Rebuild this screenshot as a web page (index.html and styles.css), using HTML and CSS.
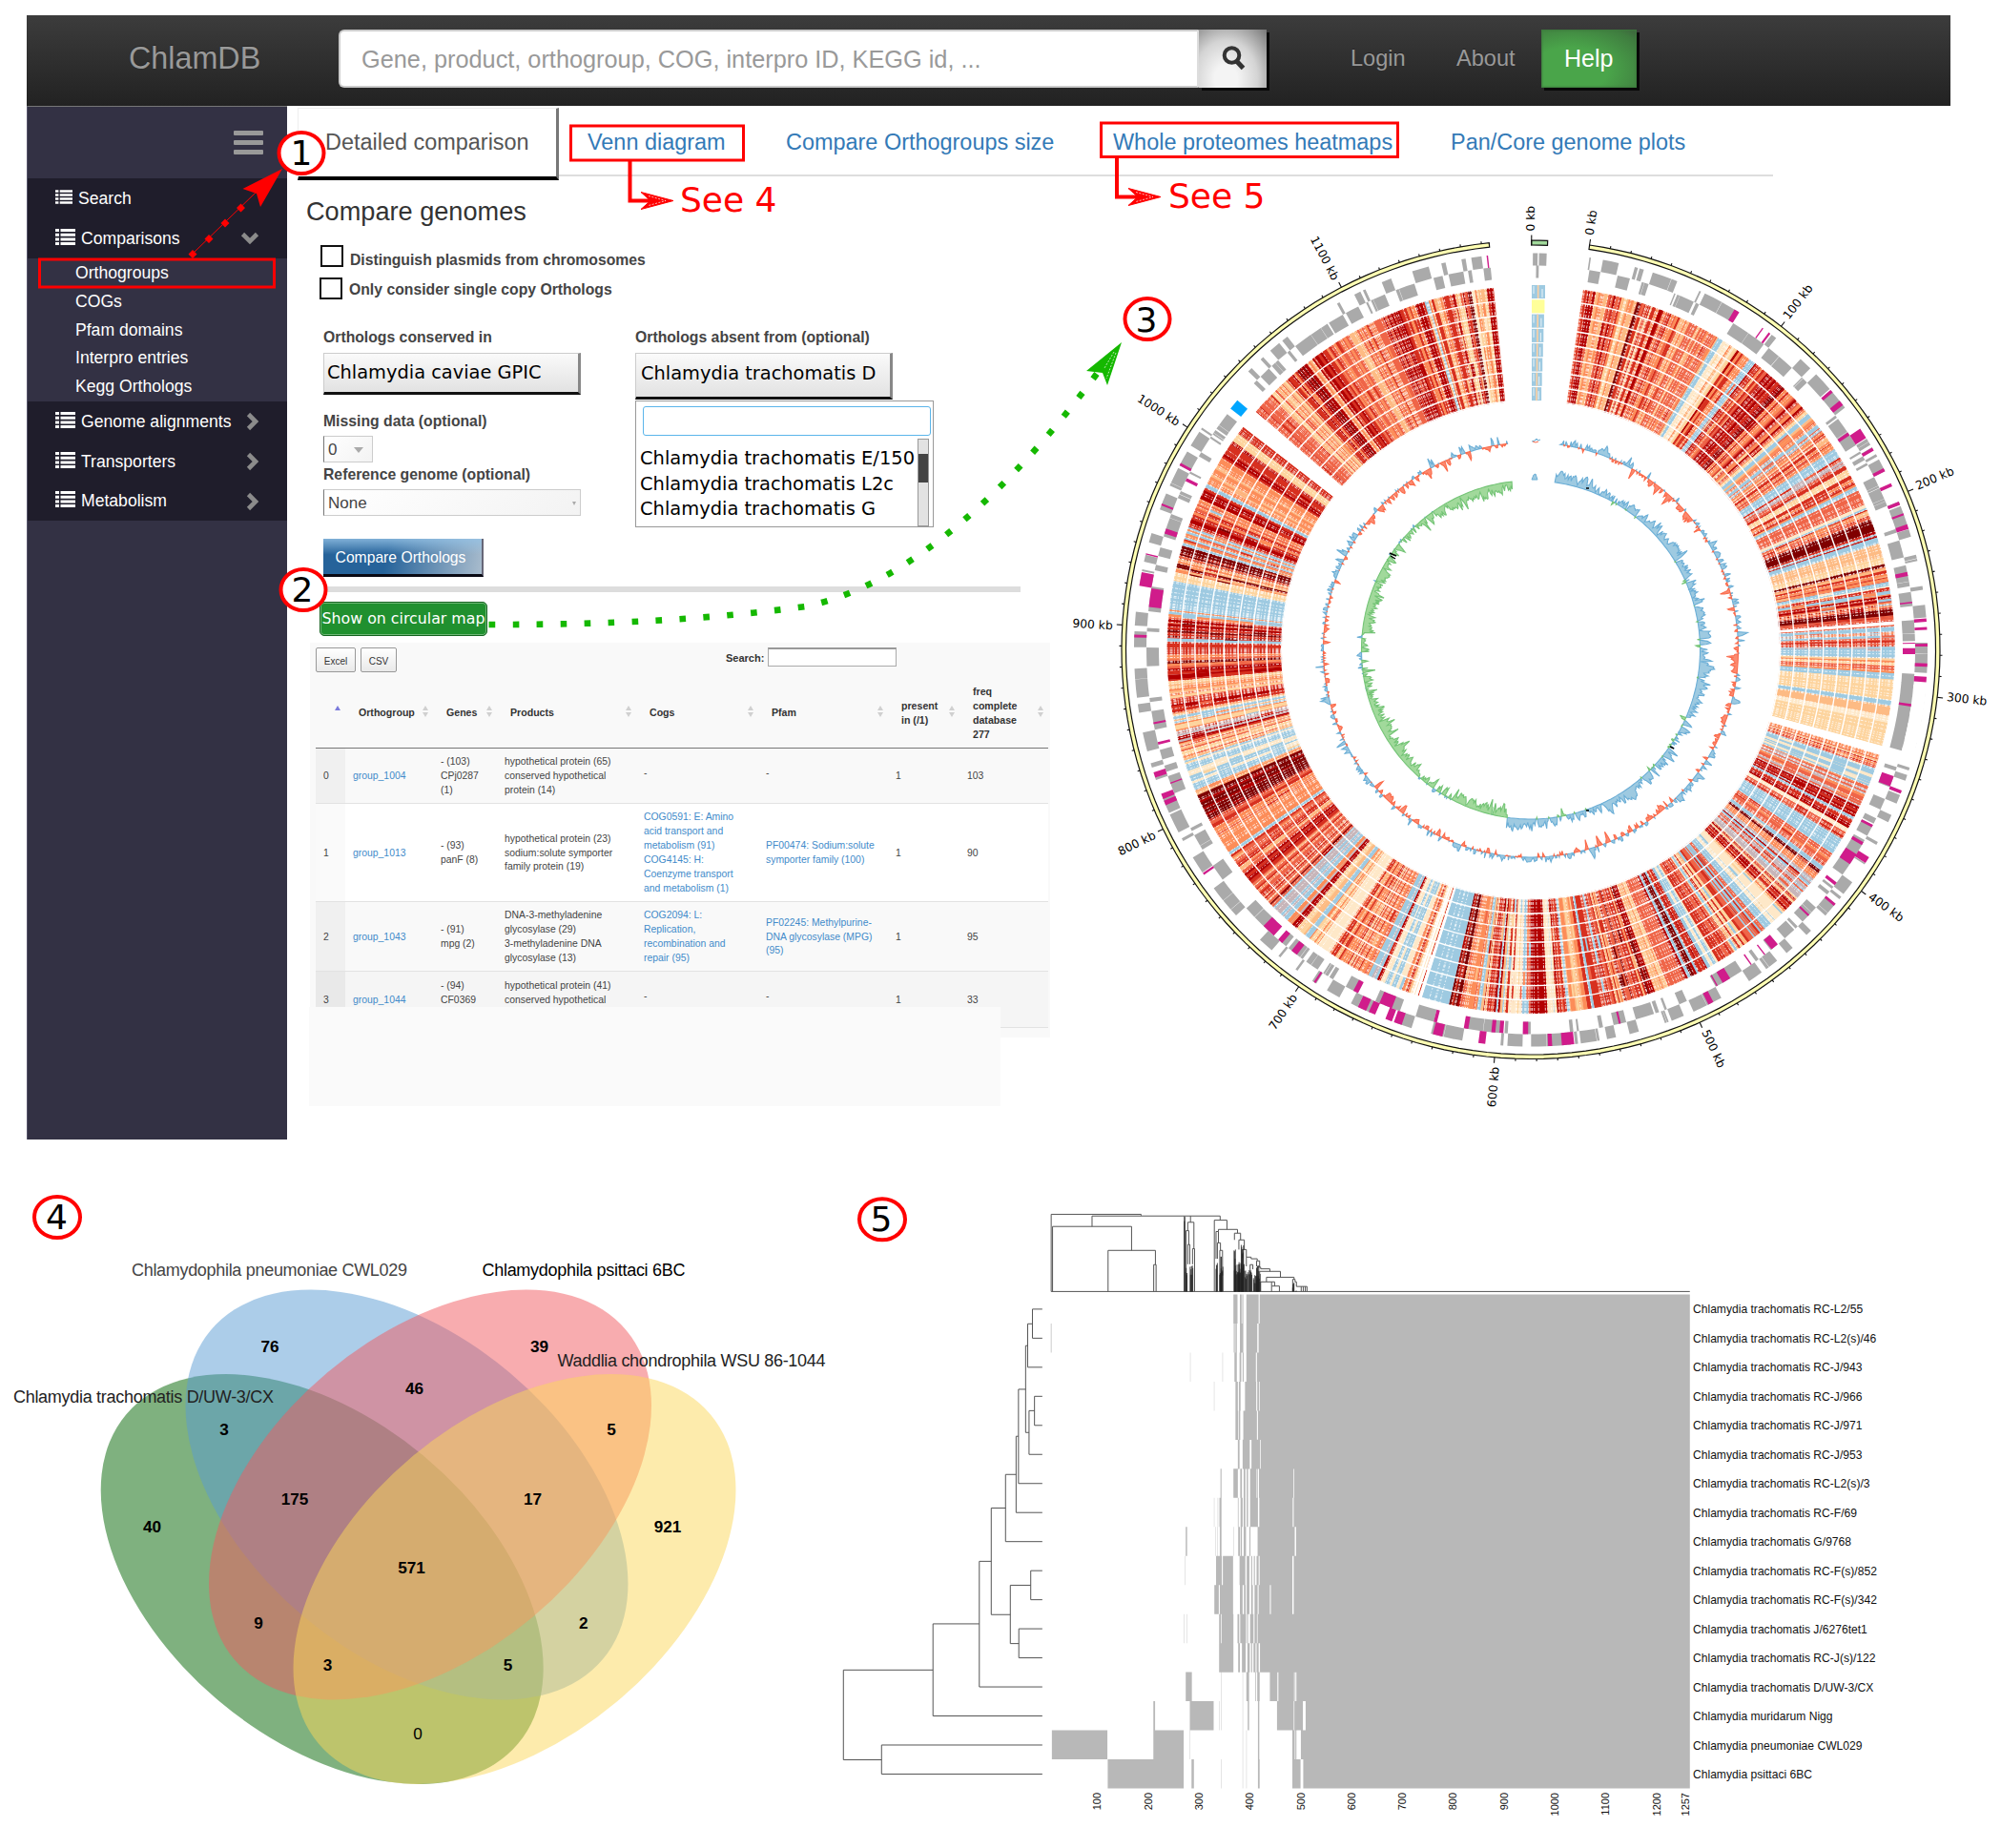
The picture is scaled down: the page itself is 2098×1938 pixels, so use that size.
FILE: index.html
```html
<!DOCTYPE html>
<html lang="en">
<head>
<meta charset="utf-8">
<title>ChlamDB</title>
<link rel="stylesheet" href="styles.css">
</head>
<body>
<svg class="defs" width="0" height="0">
  <symbol id="list" viewBox="0 0 21 17"><path d="M0 0h4v3H0zM5.500 0H21v3H5.500zM0 4.700h4v3H0zM5.500 4.700H21v3H5.500zM0 9.400h4v3H0zM5.500 9.400H21v3H5.500zM0 14h4v3H0zM5.500 14H21v3H5.500z" fill="#fff"/></symbol>
  <symbol id="chev" viewBox="0 0 14 20"><path d="M2.500 2.500L10 10l-7.500 7.500" fill="none" stroke="#8b8b8b" stroke-width="4.600"/></symbol>
</svg>
<div class="page">
  <header class="topbar">
    <a class="brand">ChlamDB</a>
    <div class="search"><span>Gene, product, orthogroup, COG, interpro ID, KEGG id, ...</span></div>
    <button class="search-btn"><svg width="26" height="28" viewBox="0 0 26 28"><circle cx="10.500" cy="11" r="7.800" fill="none" stroke="#333" stroke-width="4"/><path d="M15.500 17l7 7.500" stroke="#333" stroke-width="5"/></svg></button>
    <a class="login">Login</a><a class="about">About</a>
    <button class="help">Help</button>
  </header>

  <div class="body">
    <nav class="side">
      <div class="burger"><i></i><i></i><i></i></div>
      <div class="item search-item"><svg width="18" height="15"><use href="#list"/></svg>Search</div>
      <div class="item comp"><svg width="21" height="17"><use href="#list"/></svg>Comparisons<svg class="chev down" width="14" height="20"><use href="#chev"/></svg></div>
      <div class="sub">
        <a>Orthogroups</a><a>COGs</a><a>Pfam domains</a><a>Interpro entries</a><a>Kegg Orthologs</a>
      </div>
      <div class="item"><svg width="21" height="17"><use href="#list"/></svg>Genome alignments<svg class="chev" width="14" height="20"><use href="#chev"/></svg></div>
      <div class="item"><svg width="21" height="17"><use href="#list"/></svg>Transporters<svg class="chev" width="14" height="20"><use href="#chev"/></svg></div>
      <div class="item last"><svg width="21" height="17"><use href="#list"/></svg>Metabolism<svg class="chev" width="14" height="20"><use href="#chev"/></svg></div>
    </nav>

    <div class="content">
      <div class="tabs"><a class="active">Detailed comparison</a><a class="venn-tab">Venn diagram</a><a>Compare Orthogroups size</a><a>Whole proteomes heatmaps</a><a>Pan/Core genome plots</a></div>
      <div class="split">
        <main>
          <h1>Compare genomes</h1>
          <label class="check first"><i></i><span>Distinguish plasmids from chromosomes</span></label>
          <label class="check second"><i></i><span>Only consider single copy Orthologs</span></label>
          <div class="form">
            <div class="left">
              <b>Orthologs conserved in</b>
              <div class="pick">Chlamydia caviae GPIC</div>
              <b class="missing">Missing data (optional)</b>
              <div class="sel small">0<i></i></div>
              <b class="refg">Reference genome (optional)</b>
              <div class="sel">None<i></i></div>
              <button class="compare">Compare Orthologs</button>
            </div>
            <div class="right">
              <b>Orthologs absent from (optional)</b>
              <div class="pick tall">Chlamydia trachomatis D</div>
              <div class="drop">
                <div class="dinput"></div>
                <div class="opts"><div class="names"><span>Chlamydia trachomatis E/150</span><span>Chlamydia trachomatis L2c</span><span>Chlamydia trachomatis G</span></div><div class="bar"><i></i></div></div>
              </div>
            </div>
          </div>
          <hr>
          <button class="circ">Show on circular map</button>
          <section class="results">
            <div class="tools"><button>Excel</button><button>CSV</button><b>Search:</b><div class="tinput"></div></div>
            <table>
              <colgroup><col class="c0"><col class="c1"><col class="c2"><col class="c3"><col class="c4"><col class="c5"><col class="c6"><col class="c7"></colgroup>
              <thead><tr><th class="asc"></th><th>Orthogroup</th><th>Genes</th><th>Products</th><th>Cogs</th><th>Pfam</th><th>present<br>in (/1)</th><th>freq<br>complete<br>database<br>277</th></tr></thead>
              <tbody>
                <tr class="r0"><td>0</td><td><a>group_1004</a></td><td>- (103)<br>CPj0287<br>(1)</td><td>hypothetical protein (65)<br>conserved hypothetical<br>protein (14)</td><td class="dash">-</td><td class="dash">-</td><td>1</td><td>103</td></tr>
                <tr class="r1"><td>1</td><td><a>group_1013</a></td><td>- (93)<br>panF (8)</td><td>hypothetical protein (23)<br>sodium:solute symporter<br>family protein (19)</td><td><a>COG0591: E: Amino<br>acid transport and<br>metabolism (91)<br>COG4145: H:<br>Coenzyme transport<br>and metabolism (1)</a></td><td><a>PF00474: Sodium:solute<br>symporter family (100)</a></td><td>1</td><td>90</td></tr>
                <tr class="r2"><td>2</td><td><a>group_1043</a></td><td>- (91)<br>mpg (2)</td><td>DNA-3-methyladenine<br>glycosylase (29)<br>3-methyladenine DNA<br>glycosylase (13)</td><td><a>COG2094: L:<br>Replication,<br>recombination and<br>repair (95)</a></td><td><a>PF02245: Methylpurine-<br>DNA glycosylase (MPG)<br>(95)</a></td><td>1</td><td>95</td></tr>
                <tr class="r3"><td>3</td><td><a>group_1044</a></td><td>- (94)<br>CF0369<br>&nbsp;</td><td>hypothetical protein (41)<br>conserved hypothetical<br>&nbsp;</td><td class="dash">-</td><td class="dash">-</td><td>1</td><td>33</td></tr>
              </tbody>
            </table>
            <div class="cover"></div>
          </section>
        </main>
        <svg class="circos" id="circos" width="958" height="1005" viewBox="1140 190 958 1005"></svg>
      </div>
    </div>
  </div>

  <div class="lower">
    <svg class="venn" width="880" height="743" viewBox="0 1195 880 743">
      <g fill-opacity=".5">
        <ellipse rx="268.300" ry="167.400" fill="#006400" transform="translate(337.700 1656) rotate(40)"/>
        <ellipse rx="268.300" ry="167.400" fill="#5a9bd4" transform="translate(426.500 1567.500) rotate(40)"/>
        <ellipse rx="268.300" ry="167.400" fill="#f15a60" transform="translate(451 1567.500) rotate(-40)"/>
        <ellipse rx="268.300" ry="167.400" fill="#fbd759" transform="translate(539.500 1656) rotate(-40)"/>
      </g>
      <g class="vlabel">
        <text x="138" y="1338" textLength="289" fill="#444">Chlamydophila pneumoniae CWL029</text>
        <text x="505.500" y="1338" textLength="213" fill="#000">Chlamydophila psittaci 6BC</text>
        <text x="584.500" y="1433" textLength="281" fill="#222">Waddlia chondrophila WSU 86-1044</text>
        <text x="14" y="1471" textLength="273" fill="#222">Chlamydia trachomatis D/UW-3/CX</text>
      </g>
      <g class="vnum">
        <text x="283" y="1418">76</text><text x="565.500" y="1418">39</text><text x="434.600" y="1462">46</text>
        <text x="235" y="1505">3</text><text x="641" y="1505">5</text><text x="309" y="1578">175</text>
        <text x="558.500" y="1578">17</text><text x="159.500" y="1607">40</text><text x="700" y="1607">921</text>
        <text x="431.500" y="1650">571</text><text x="271" y="1708">9</text><text x="611.700" y="1708">2</text>
        <text x="343.500" y="1752">3</text><text x="532.500" y="1752">5</text><text x="438" y="1824" class="plain">0</text>
      </g>
    </svg>
    <svg class="heat" id="heat" width="1218" height="743" viewBox="880 1195 1218 743"></svg>
  </div>

  <svg class="notes" width="2098" height="1938" viewBox="0 0 2098 1938">
    <g fill="none" stroke="#f00" stroke-width="3">
      <rect x="41.500" y="272" width="246" height="29"/>
      <rect x="598.500" y="132" width="181" height="36"/>
      <rect x="1154.500" y="129" width="311" height="35.500"/>
      <path stroke-width="4" d="M660.500 168V210.500H685M1171 165V206.500H1197"/>
    </g>
    <path fill="#f00" stroke="#f00" d="M706 210.500L672 201.500L682 210.500L672 219.500ZM1217 206.500L1183 197.500L1193 206.500L1183 215.500Z"/>
    <path fill="none" stroke="#fff" stroke-width=".7" stroke-dasharray="2 1.500" d="M680 205.500l18 5-18 5M1191 201.500l18 5-18 5"/>
    <path stroke="#f00" stroke-width="1" d="M202 266L270 200"/>
    <path fill="#f00" d="M296 177L254.500 198L269 203L273 217ZM202 262l4.500 4.500-4.500 4.500-4.500-4.500zM219 246l4.500 4.500-4.500 4.500-4.500-4.500zM236 229.500l4.500 4.500-4.500 4.500-4.500-4.500zM252.500 213.500l4.500 4.500-4.500 4.500-4.500-4.500z"/>
    <path fill="none" stroke="#15b800" stroke-width="6.600" stroke-dasharray="6.600 18.400" d="M512.500 655C640 655 740 650 845 636C960 612 1070 500 1150 392"/>
    <path fill="#15b800" d="M1176 359L1139 389L1156 391L1161 404Z"/>
    <path fill="none" stroke="#fff" stroke-width=".7" stroke-dasharray="2 1.500" d="M1168 369l-10 17M1170 370l-10 27"/>
    <g fill="#fff" stroke="#f00" stroke-width="4">
      <ellipse cx="316" cy="160.500" rx="23.500" ry="21.500"/><ellipse cx="318" cy="618.500" rx="23.500" ry="21.500"/><ellipse cx="1203" cy="334.600" rx="23.500" ry="21.500"/><ellipse cx="60" cy="1276.500" rx="24" ry="21.500"/><ellipse cx="925" cy="1278.700" rx="24" ry="21.500"/>
    </g>
    <g class="mark"><text x="316" y="173">1</text><text x="317" y="631">2</text><text x="1202" y="347.500">3</text><text x="59.500" y="1289">4</text><text x="924" y="1291">5</text></g>
    <g class="see"><text x="713" y="221.500">See 4</text><text x="1225" y="217.500">See 5</text></g>
  </svg>
</div>
<script src="charts.js"></script>
</body>
</html>
```

FILE: styles.css
```css
* { box-sizing: border-box; }
body { margin: 0; background: #fff; font-family: "Liberation Sans", Arial, sans-serif; color: #333; }
button { font-family: inherit; border: 0; padding: 0; }
.defs { position: absolute; }
.page { position: relative; width: 2098px; height: 1938px; padding-top: 16px; overflow: hidden; }
.topbar { display: flex; align-items: flex-start; margin-left: 28px; width: 2017px; height: 95px; padding-top: 15px; background: linear-gradient(#3c3c3c, #222); color: #999; font-size: 23.600px; line-height: 60px; text-shadow: 0 -1px 0 rgba(0,0,0,.3); }
.brand { width: 327px; padding-left: 107px; font-size: 32.300px; }
.search { width: 902px; height: 61px; padding-left: 22px; background: #fff; border: 2px solid #ccc; border-right-color: #ddd; border-radius: 6px 0 0 6px; font-size: 25.300px; line-height: 58px; text-shadow: none; }
.search-btn { display: flex; align-items: center; justify-content: center; width: 71px; height: 61px; background: radial-gradient(ellipse at 40% 85%, #f4f4f4 20%, #d4d4d4 55%, #777 100%); box-shadow: 3px 3px 0 #080808; }
.search-btn svg { margin: -2px 0 0 2px; }
.login { margin-left: 88px; width: 111px; }
.about { width: 89px; }
.help { width: 100px; height: 61px; background: radial-gradient(ellipse at 30% 70%, #4aa54a 40%, #3f7c3f 85%, #3e613e 100%); box-shadow: inset 0 0 2px 1px #3d7a3d, 3px 3px 0 #080808; color: #fff; font-size: 25px; text-align: left; padding-left: 24px; }
.body { display: flex; height: 1084px; }
.side { width: 273px; margin-left: 28px; background: #333144; border-left: 1px solid #55546a; border-top: 1px solid #777; color: #fff; font-size: 17.600px; }
.burger { height: 75px; padding: 25px 0 0 216px; display: flex; flex-direction: column; gap: 5px; }
.burger i { width: 31px; height: 5px; background: #999; border-radius: 1px; }
.item { display: flex; align-items: center; height: 42px; padding-left: 29px; background: #1f1d2b; }
.item > svg:first-child { margin: -4px 6px 0 0; }
.item .chev { margin: 0 29px 0 auto; }
.item .chev.down { transform: rotate(90deg); margin-right: 32px; }
.last { height: 41px; }
.sub { display: flex; flex-direction: column; height: 150px; }
.sub a { height: 29.800px; line-height: 30px; padding-left: 50px; }
.content { width: 1797px; }
.tabs { display: grid; grid-template-columns: 274px 238px 343px 354px 338px; height: 79px; margin-left: 11px; font-size: 23.450px; line-height: 76px; color: #337ab7; width: 1547px; background: linear-gradient(#ddd, #ddd) 0 72px / 100% 2px no-repeat; }
.tabs a { white-space: nowrap; height: 72px; }
.tabs .active { padding-left: 28px; color: #555; background: #fff; border: 1px solid #eee; margin-top: 2px; height: 76px; border-bottom: 4px solid #000; border-right: 3px solid #777; line-height: 71px; }
.tabs .venn-tab { padding-left: 30px; }
.split { display: flex; }
main { width: 839px; flex: none; }
h1 { margin: 15px 0 0 20px; font-size: 27.150px; line-height: 34px; font-weight: 400; }
.check { display: flex; height: 24px; margin: 18px 0 0 35px; font-size: 15.750px; font-weight: 700; color: #444; line-height: 24px; }
.check i { width: 24px; height: 23px; border: 2px solid #111; background: #fff; margin-right: 7px; }
.check.second { margin: 10px 0 0 34px; }
.first span { padding-top: 4px; }
.second span { padding-top: 1px; }
.form { display: grid; grid-template-columns: 270px 313px; column-gap: 57px; margin: 27px 0 0 38px; height: 263px; font-size: 15.750px; color: #444; }
.form b { display: block; height: 20px; line-height: 23px; white-space: nowrap; }
.pick { height: 44px; margin-top: 8px; padding-left: 3px; background: linear-gradient(#fafafa, #e2e2e2); border-bottom: 3px solid #111; border-right: 3px solid #888; border-top: 1px solid #ccc; border-left: 1px solid #ccc; font: 19.400px/40px "DejaVu Sans", sans-serif; color: #000; white-space: nowrap; }
.pick.tall { height: 49px; line-height: 42px; width: 270px; padding-left: 5px; }
.form .missing { margin-top: 16px; }
.sel { display: flex; align-items: center; justify-content: space-between; height: 28px; margin-top: 7px; padding: 2px 4px 0; border: 1px solid #ccc; border-left-color: #777; background: linear-gradient(135deg, #fff, #f3f3f3); font-size: 17px; }
.sel.small { width: 52px; padding-right: 9px; }
.sel i { border: 2px solid transparent; border-top: 4px solid #aaa; border-bottom: 0; }
.sel.small i { border-width: 5px; border-top-width: 6px; border-bottom: 0; }
.form .refg { margin-top: 1px; }
.compare { margin-top: 24px; width: 168px; height: 40px; padding: 2px 4px 0 0; background: linear-gradient(rgba(150,195,230,.8), rgba(40,100,150,0) 45%), linear-gradient(100deg, #26639a 40%, #a9bccd); border-bottom: 3px solid #0a0a14; border-right: 2px solid #667; color: #fff; font-size: 15.700px; }
.drop { height: 133px; margin-top: 1px; border: 1.500px solid #999; background: #fff; padding: 5px 2px 0 6px; }
.dinput { height: 31px; border: 1.500px solid #5bb5ea; border-radius: 3px; margin-left: 1px; }
.opts { display: flex; margin-top: 3px; height: 92px; }
.names { display: flex; flex-direction: column; padding-top: 8px; width: 288px; margin-left: -2px; font: 19.450px/26.500px "DejaVu Sans", sans-serif; color: #000; white-space: nowrap; }
.bar { width: 12px; margin-left: 3px; background: #e2e2e2; border: 1px solid #999; padding-top: 15px; height: 92px; }
.bar i { display: block; height: 30px; background: #444; }
hr { margin: 10px 0 0 24px; width: 745px; height: 6px; border: 0; background: #ddd; }
.circ { display: block; margin: 10px 0 0 34px; width: 176px; height: 36px; background: #20902f; border-radius: 5px; border: 1px solid #14641f; box-shadow: inset 0 0 0 1px #6fb877; color: #fff; font: 15.800px/32px "DejaVu Sans", sans-serif; white-space: nowrap; }
.results { position: relative; margin: 7px 0 0 24px; width: 776px; height: 414px; padding: 5px 0 0 6px; background: #f9f9f9; font-size: 10.400px; color: #333; }
.tools { display: flex; height: 26px; }
.tools button { width: 42px; height: 26px; margin-right: 5px; border: 1px solid #999; border-radius: 2px; background: linear-gradient(#fff, #e9e9e9); font-size: 10px; color: #333; padding-top: 2px; }
.tools button + button { width: 38px; margin: 0; }
.tools b { width: 44px; margin-left: 345px; font-size: 11px; line-height: 22px; }
.tinput { width: 135px; height: 20px; background: #fff; border: 1px solid #aaa; border-top: 2px solid #999; }
table { border-collapse: collapse; table-layout: fixed; width: 768px; line-height: 14.950px; }
.c0 { width: 31px; } .c1 { width: 92px; } .c2 { width: 67px; } .c3 { width: 146px; } .c4 { width: 128px; } .c5 { width: 136px; } .c6 { width: 75px; } .c7 { width: 93px; }
th { height: 79px; padding: 7px 0 0 14px; text-align: left; font-size: 10.600px; white-space: nowrap; border-bottom: 1.500px solid #777; position: relative; }
th::before, th::after { content: ""; position: absolute; right: 5px; border: 3px solid transparent; }
th::before { top: 35px; border-bottom: 5px solid #d0d0d0; border-top: 0; }
th::after { top: 42px; border-top: 5px solid #d0d0d0; border-bottom: 0; }
.asc::before { border-bottom-color: #7b7bdc; } .asc::after { display: none; }
td { padding: 3px 0 0 8px; white-space: nowrap; vertical-align: middle; border-bottom: 1px solid #e2e2e2; color: #444; }
td a { color: #428bca; }
td.dash { padding-bottom: 7px; }
.r0 { height: 58px; } .r1 { height: 103px; background: #fff; } .r2 { height: 73px; } .r3 { height: 59px; background: #f5f5f5; }
td:first-child { background: #f0f0f0; } .r1 td:first-child { background: #fafafa; } .r3 td:first-child { background: #e9e9e9; }
.cover { position: absolute; left: -1px; top: 382px; width: 725px; height: 104px; background: #fafafa; }
.circos, .lower svg { flex: none; display: block; overflow: visible; }
.circos text { font: 12.300px "DejaVu Sans", sans-serif; dominant-baseline: central; }
.lower { display: flex; }
.vlabel text { font-size: 18px; }
.vnum text { font-size: 17.200px; font-weight: 700; text-anchor: middle; fill: #000; }
.vnum .plain { font-weight: 400; }
.heat text { font-size: 12.100px; fill: #111; }
.heat .axis { font-size: 11px; text-anchor: end; }
.notes { position: absolute; left: 0; top: 0; pointer-events: none; }
.mark text { font: 36px "DejaVu Sans", sans-serif; text-anchor: middle; fill: #000; }
.see text { font: 36px "DejaVu Sans", sans-serif; fill: #f00; }
```

FILE: charts.js
```js
// Seeded generator, so the tracks are drawn the same on every load.
let seed = 7;
const rnd = () => {
  seed = (seed + 0x6D2B79F5) | 0;
  let t = Math.imul(seed ^ (seed >>> 15), 1 | seed);
  t = (t + Math.imul(t ^ (t >>> 7), 61 | t)) ^ t;
  return ((t ^ (t >>> 14)) >>> 0) / 4294967296;
};
const CX = 1605, CY = 681.5;
const pt = (r, a) => {
  const t = a * Math.PI / 180;
  return (CX + r * Math.sin(t)).toFixed(1) + ' ' + (CY - r * Math.cos(t)).toFixed(1);
};
const quad = (r1, r2, a, b) => {
  const big = b - a > 2 ? Math.ceil((b - a) / 2) : 1;
  let s = 'M' + pt(r1, a);
  for (let i = 1; i <= big; i++) s += 'L' + pt(r1, a + (b - a) * i / big);
  for (let i = big; i >= 0; i--) s += 'L' + pt(r2, a + (b - a) * i / big);
  return s + 'Z';
};
let out = '';

// Chromosome band and plasmid band
out += `<path d="${quad(429, 424.5, 8.26, 354.15)}" fill="#ffffb3" stroke="#111" stroke-width="1.2"/>`;
out += `<path d="${quad(429.5, 424.5, 0.1, 2.36)}" fill="#a1d99b" stroke="#111" stroke-width="1.2"/>`;
let ticks = '';
for (let k = 0; k <= 117; k++) {
  const a = 8.26 + k * 2.947;
  ticks += 'M' + pt(429, a) + 'L' + pt(k % 10 ? 431.5 : 435, a);
}
ticks += 'M' + pt(424, 0.1) + 'L' + pt(435, 0.1);
out += `<path d="${ticks}" stroke="#111" stroke-width="1.1"/>`;
const label = (a, s) => {
  const left = a > 180;
  const rot = left ? a + 90 : a - 90;
  out += `<text transform="translate(${pt(439, a)}) rotate(${rot})" text-anchor="${left ? 'end' : 'start'}">${s}</text>`;
};
label(0, '0 kb');
for (let k = 0; k < 12; k++) label(8.06 + k * 29.47, k * 100 + ' kb');

// Gene blocks on two strands
let gray = '';
let a = 8.5, row = 1;
while (a < 354) {
  const w = rnd() < 0.45 ? 0.2 + rnd() * 0.5 : 0.8 + rnd() * 2.1;
  const e = Math.min(a + w, 354);
  if (!((a > 306.5 && a < 311) || (e > 105.2 && a < 107))) gray += row ? quad(416, 403, a, e) : quad(403, 390, a, e);
  a = e + (rnd() < 0.3 ? 0.25 : 0.05);
  if (rnd() < 0.75) row = 1 - row;
}
gray += quad(403, 390, 95, 105.2) + quad(416, 403, 0.3, 1) + quad(416, 403, 1.2, 2.3) + quad(403, 390, 0.8, 1.2);
out += `<path d="${gray}" fill="#aaa"/><path d="${quad(416.5, 403, 95.2, 105.5)}" fill="#fff"/>`;
const magenta = [[31.3,1,.8],[35.8,1,.2],[37,1,.3],[49.3,1,.5],[51.5,1,.8],[56.9,1,1.6],[55.8,0,.5],[59.6,1,.5],[63,1,.5],[65.4,1,.5],[68.3,1,.5],[70,1,.3],[71.9,1,.7],[78.6,0,.6],[82.9,0,.2],[85.7,1,.5],[86.9,1,.4],[89.3,1,.4],[89,0,.15],[90.2,0,.9],[92.2,1,.5],[94.3,1,.8],[98.3,0,.4],[110,0,1.6],[111,1,.5],[117.3,0,.4],[120.3,0,.5],[123,0,1.8],[122,1,1],[127.5,0,.5],[130,1,.4],[133.7,0,.3],[140.6,0,1.2],[142.5,0,.2],[145,0,.2],[149.4,0,1.3],[151,0,.2],[153,1,.8],[166.6,0,.3],[174.6,1,1.8],[177.2,1,.6],[180.8,0,.8],[184.4,0,.6],[185.6,0,.6],[187.1,1,1],[189.7,0,.7],[193.6,1,1.4],[194.4,0,.5],[199.6,1,1.2],[201,1,1],[202.2,0,2],[203.6,1,1],[205.2,1,1.3],[207.1,0,.8],[213,1,.3],[218,0,1],[220.7,0,.8],[223,0,2.1],[235.6,1,.3],[247.3,1,.7],[248.3,1,.8],[251.6,1,.8],[249.7,0,.2],[255.9,0,.4],[259,0,.3],[272,1,.4],[277.8,0,2.8],[280.3,1,2],[284,1,.2],[288,0,.8],[291.5,1,.3],[296.3,0,.5],[297.9,1,.4],[353.7,1,.2]];
out += `<path d="${magenta.map(([c, o, w]) => o ? quad(416, 403, c - w / 2, c + w / 2) : quad(403, 390, c - w / 2, c + w / 2)).join('')}" fill="#d01c8b"/>`;
out += `<path d="${quad(404, 390, 308.8, 310.4)}" fill="#00a6ff"/>`;

// Homolog identity rings: [end angle, colour keys], keys weighted by repetition
const pal = { k: '#7f0000', d: '#b30000', r: '#d7301f', e: '#ef6548', o: '#fc8d59', l: '#fdbb84', p: '#fdd49e', w: '#fee8c8', b: '#9ecae1', g: '#c7b5b9', x: '#fff' };
const segs = [[10.3,'rde'],[12.3,'llo'],[14.5,'drer'],[17,'lpo'],[17.6,'k'],[19.5,'rep'],[21.5,'kdro'],[23.5,'roe'],[31,'eeoerl'],[32.5,'bpw'],[34.5,'plwo'],[37,'rrdo'],[38,'beb'],[40.5,'droel'],[43.2,'drd'],[44.3,'kkd'],[49,'eroedp'],[50,'gpb'],[53,'oebl'],[56.5,'eoolr'],[58,'bb'],[60.3,'ergg'],[61.3,'p'],[63.3,'rolr'],[64,'b'],[66.5,'ee'],[67.3,'bw'],[69,'rleo'],[71,'kkk'],[72,'drb'],[73,'b'],[75.2,'l'],[76.3,'p'],[76.8,'k'],[79.2,'elor'],[80,'bw'],[83.5,'drobe'],[84.5,'k'],[85.5,'re'],[86,'x'],[88,'boeb'],[89.5,'erl'],[91.3,'bbbg'],[92.5,'dopb'],[93.7,'ero'],[94.7,'b'],[98,'p'],[98.8,'b'],[100.5,'l'],[101.5,'w'],[105.3,'p'],[106.7,'x'],[107.3,'o'],[109,'drleo'],[112,'bbbw'],[115.5,'eoeeg'],[119.3,'ddrrb'],[120,'w'],[121.3,'re'],[124,'b'],[126.5,'eore'],[127.2,'wb'],[129,'kooe'],[133,'ebrdog'],[136,'drepo'],[138.5,'wwpb'],[140,'pbw'],[143.5,'erreb'],[146,'plobr'],[149,'eer'],[151,'bbw'],[152.5,'rdo'],[155,'kbrd'],[157.8,'eee'],[160,'plo'],[161.3,'kd'],[162.5,'rol'],[165,'kerr'],[166.3,'rlo'],[171,'rrreeb'],[173.8,'olp'],[174.2,'b'],[176,'drpe'],[177.3,'wpb'],[180,'ddd'],[181.5,'oeb'],[184.5,'pwber'],[188.5,'erlbd'],[191.3,'oole'],[193,'kdr'],[197.4,'b'],[198.1,'rx'],[199.3,'wx'],[200.8,'lor'],[204.4,'bbbbw'],[205,'rd'],[206.5,'bgb'],[213.6,'eorlo'],[215.8,'w'],[217.5,'oep'],[218.3,'b'],[220,'pl'],[221,'d'],[222,'go'],[225,'bbbg'],[226.2,'kde'],[230,'eeolr'],[232,'rrd'],[235.7,'eorl'],[236.2,'b'],[238.9,'o'],[242.2,'rdereo'],[246.4,'kkkd'],[247.3,'ol'],[252.2,'bwbpb'],[255,'lpeo'],[257,'drgg'],[260,'pbol'],[262.3,'drre'],[265,'oolep'],[267,'drdo'],[267.8,'eo'],[268.2,'k'],[269.3,'oe'],[271.3,'rrr'],[271.8,'b'],[275.2,'drek'],[276.4,'oob'],[280.9,'b'],[282.3,'p'],[284.6,'kolr'],[286.7,'drke'],[290,'eebro'],[291.5,'kdr'],[294.5,'ebroo'],[296.5,'drd'],[297.1,'b'],[301.8,'oolo'],[305,'rrrd'],[306.4,'p'],[307.8,'rr'],[310.9,'x'],[314,'eer'],[318,'olper'],[320,'rdo'],[322,'kdd'],[323,'ol'],[325,'dder'],[330,'eero'],[331.2,'lp'],[336,'eeor'],[339.5,'ddre'],[341.4,'or'],[343,'drd'],[343.6,'lb'],[347.5,'roler'],[350,'derlp'],[350.6,'k'],[353,'lpeow'],[354.1,'rd']];
const layers = {};
const top2 = {};
let specks = '';
a = 8.27;
for (const [end, keys] of segs) {
  while (a < end - 0.01) {
    const e = Math.min(end, a + 0.14 + rnd() * 0.34);
    const k = keys[Math.floor(rnd() * keys.length)];
    layers[k] = (layers[k] || '') + quad(382, 261, a, e + 0.04);
    if (k !== 'x') {
      for (let i = 0; i < 8; i++) {
        if (rnd() < 0.16) {
          const q = keys[Math.floor(rnd() * keys.length)];
          const r = 382 - i * 15.125;
          top2[q] = (top2[q] || '') + quad(r, r - 15.1, a, e);
        }
      }
      if (rnd() < 0.55) specks += 'M' + pt(382, a) + 'L' + pt(261, a);
    }
    a = e;
  }
}
for (const set of [layers, top2]) for (const k in set) out += `<path d="${set[k]}" fill="${pal[k]}"/>`;
out += `<path d="${specks}" stroke="#fff" stroke-width=".8" stroke-dasharray="1.6 1.9 3 1.4 1 2.2"/>`;
// Plasmid column
for (let i = 0; i < 8; i++) {
  const y = 299 + i * 15.3, w = 14 - i * 0.55;
  out += `<rect x="1606" y="${y}" width="${w}" height="14" fill="${i === 1 ? '#ffff99' : '#9ecae1'}"/>`;
  if (i !== 1) out += `<rect x="${1606 + w * 0.42}" y="${y}" width="1.6" height="14" fill="#fdd0a2"/><path d="M${1608} ${y + 1}v8M${1606 + w - 3} ${y + 4}v9" stroke="#fff" stroke-width=".8"/>`;
}
for (let i = 0; i < 9; i++) out += `<path d="M${pt(382.4 - i * 15.125, 8)}A${382.4 - i * 15.125} ${382.4 - i * 15.125} 0 1 1 ${pt(382.4 - i * 15.125, 354.5)}" fill="none" stroke="#fff" stroke-width="1.4"/>`;

// GC skew and GC content: one filled shape per run of equal sign
const area = (base, f, pos, neg) => {
  const paths = ['', ''];
  let run = [], sign = 0, v = 0;
  const flush = () => {
    if (!run.length) return;
    const t0 = run[0][0] - 0.15, t1 = run[run.length - 1][0] + 0.15;
    let s = 'M' + pt(base, t0);
    run.forEach(([t, h]) => { s += 'L' + pt(base + h, t); });
    for (let t = t1; t > t0; t -= 1) s += 'L' + pt(base, t);
    paths[sign > 0 ? 0 : 1] += s + 'Z';
    run = [];
  };
  for (let t = 8.3; t <= 353.5; t += 0.34) {
    v = v * 0.4 + (rnd() - 0.5) * (rnd() < 0.12 ? 26 : 11);
    const h = f(t, v);
    if (Math.sign(h) !== sign) { flush(); sign = Math.sign(h); }
    run.push([t, h]);
  }
  flush();
  out += `<path d="${paths[0]}" fill="${pos[0]}" stroke="${pos[1]}" stroke-width="1.1"/><path d="${paths[1]}" fill="${neg[0]}" stroke="${neg[1]}" stroke-width="1.1"/>`;
};
area(217.5, (t, v) => v * 0.8 + 1.6 * Math.sin(t / 9), ['#9ecae1', '#6baed6'], ['#fb8a70', '#fb6a4a']);
area(177.5, (t, v) => (t < 188 ? 5.5 + 2.5 * Math.sin(t / 7) : -5.5 + 2.5 * Math.sin(t / 8)) + v * 0.8, ['#9ecae1', '#6baed6'], ['#a1d99b', '#74c476']);
out += '<path d="M1606 463l3-1 2-2 2 2 2-1M1606 503l2-5 2-1 1 3 1 3z" stroke="#6baed6" fill="#9ecae1"/><path d="M1607 463l3 1 3-1" stroke="#fb6a4a" fill="none"/>';
out += '<path d="M1457 580l7 3M1458 583l5 3M1663 512h3M1751 783l4 2M1663 850h3" stroke="#000" stroke-width="1.4"/>';
document.getElementById('circos').innerHTML = out;

// Presence matrix with its dendrograms, in a 2.8 x 2.272 unit grid
const E = 2553;
const rows = [
  [[1213,1225],[1232,1237],[1239,1242],[1251,1287],[1290,E]],
  [[677,679],[1214,1217],[1219,1223],[1232,1242],[1251,1283],[1287,E]],
  [[1086,1087],[1181,1182],[1216,1223],[1231,1236],[1240,1243],[1251,1279],[1282,E]],
  [[1156,1157],[1219,1226],[1229,1234],[1247,1280],[1283,1288],[1290,E]],
  [[1219,1227],[1229,1233],[1242,1282],[1285,E]],
  [[1226,1231],[1240,1261],[1266,1291],[1293,E]],
  [[1175,1178],[1213,1226],[1233,1238],[1243,1248],[1252,1256],[1262,1281],[1283,1285],[1288,1389],[1391,E]],
  [[1156,1157],[1167,1168],[1172,1178],[1226,1228],[1234,1240],[1243,1248],[1252,1256],[1262,1285],[1289,1387],[1390,E]],
  [[1073,1077],[1160,1161],[1165,1166],[1173,1178],[1213,1214],[1227,1232],[1234,1238],[1243,1250],[1260,1263],[1284,1393],[1397,E]],
  [[1070,1071],[1162,1179],[1182,1212],[1231,1248],[1252,1260],[1265,1268],[1273,1276],[1281,1287],[1290,1386],[1390,E]],
  [[1157,1170],[1173,1212],[1232,1240],[1244,1249],[1252,1260],[1265,1270],[1275,1284],[1287,1320],[1323,1386],[1390,E]],
  [[1068,1069],[1076,1077],[1171,1176],[1178,1213],[1225,1230],[1233,1250],[1253,1256],[1262,1272],[1275,1282],[1284,E]],
  [[1171,1213],[1227,1232],[1238,1249],[1254,1261],[1265,1268],[1272,1278],[1281,1287],[1291,E]],
  [[1073,1091],[1177,1178],[1240,1241],[1251,1259],[1277,1279],[1283,1290],[1320,1342],[1345,1391],[1393,1395],[1398,E]],
  [[978,983],[1085,1155],[1171,1172],[1177,1178],[1240,1241],[1255,1259],[1285,1289],[1341,1390],[1392,1417],[1425,E]],
  [[680,843],[978,1067],[1085,1086],[1240,1241],[1251,1252],[1285,1289],[1386,1393],[1395,1398],[1411,E]],
  [[844,1067],[1090,1097],[1177,1178],[1240,1241],[1251,1252],[1285,1290],[1386,1410],[1418,E]]
];
const names = ['trachomatis RC-L2/55','trachomatis RC-L2(s)/46','trachomatis RC-J/943','trachomatis RC-J/966','trachomatis RC-J/971','trachomatis RC-J/953','trachomatis RC-L2(s)/3','trachomatis RC-F/69','trachomatis G/9768','trachomatis RC-F(s)/852','trachomatis RC-F(s)/342','trachomatis J/6276tet1','trachomatis RC-J(s)/122','trachomatis D/UW-3/CX','muridarum Nigg','pneumoniae CWL029','psittaci 6BC'];
let m = '';
rows.forEach((r, i) => r.forEach(([x0, x1]) => { m += `M${x0} ${(267 + i * 69.24).toFixed(1)}H${x1}v69.4H${x0}Z`; }));
const y = i => 302 + i * 69.25;
const T = 652;
const merges = [[y(0),T,y(1),T,623],[337,623,y(2),T,609],[y(3),T,y(4),T,629],[544,629,y(5),T,613],[389,609,596,613,603],[493,603,y(6),T,582],[605,582,y(7),T,575],[696,575,y(8),T,544],[y(9),T,y(10),T,618],[y(11),T,y(12),T,583],[960,618,1099,583,558],[776,544,1030,558,502],[903,502,y(13),T,467],[1052,467,y(14),T,331],[y(15),T,y(16),T,180],[1162,331,1376,180,68]];
let tree = merges.map(([ya, xa, yb, xb, x]) => `M${xa} ${ya}H${x}V${yb}H${xb}`).join('');
tree += 'M678 260V76H942V79M798 105V80H1174V90M682 260V105H914V162M845 260V162H984V196M979 260V196H986V260M1069 260V80M1079 115V95H1097V158M1087 80V95M1074 260V115H1082V148M1079 195V148H1085V195M1093 195V158H1099V260M1157 260V90H1194V112M1162 182V117H1169V144M1166 182V144H1175V162M1173 260V162H1181V222M1169 117V112H1225V121M1216 137V121H1234V137M1229 160V137H1245V160M1240 180V160H1251V178M1251 200V178H1265V182H1283V186M1262 210V196H1270V207M1281 200V187H1290V202M1285 202H1293V206H1320V212M1290 235V212H1351V226M1310 237V226H1391V231M1293 260V237H1334V247M1325 260V247H1348V260M1325 237V247M1387 260V231H1394V237H1398V248H1429V260M1412 248V260M1418 248V260M1424 248V260M678 260H2553';
const bars = [[1069,1071,80],[1073,1077,195],[1086,1094,195],[1162,1166,185],[1173,1183,200],[1176,1178,162],[1215,1220,160],[1216,1232,195],[1227,1245,190],[1236,1243,145],[1246,1256,205],[1258,1268,205],[1272,1292,215],[1281,1288,195],[1387,1392,230],[1395,1398,238]];
let dark = '';
bars.forEach(([x0, x1, t]) => { for (let x = x0; x <= x1; x += 1.3) dark += `M${x} 260V${(t + rnd() * 26).toFixed(0)}`; });
let h = `<g transform="translate(860 1240) scale(.35714 .44005)" fill="none"><path d="${m}" fill="#b8b8b8"/><path d="${tree}" stroke="#555" stroke-width="1" vector-effect="non-scaling-stroke"/><path d="${dark}" stroke="#222" stroke-width=".8" vector-effect="non-scaling-stroke"/></g>`;
names.forEach((n, i) => { h += `<text x="1775" y="${(1377.2 + i * 30.49).toFixed(1)}">Chlamydia ${n}</text>`; });
for (const n of [100,200,300,400,500,600,700,800,900,1000,1100,1200,1257]) h += `<text class="axis" transform="translate(${(1101 + n * 0.533).toFixed(1)} 1880) rotate(-90)">${n}</text>`;
document.getElementById('heat').innerHTML = h;
```
